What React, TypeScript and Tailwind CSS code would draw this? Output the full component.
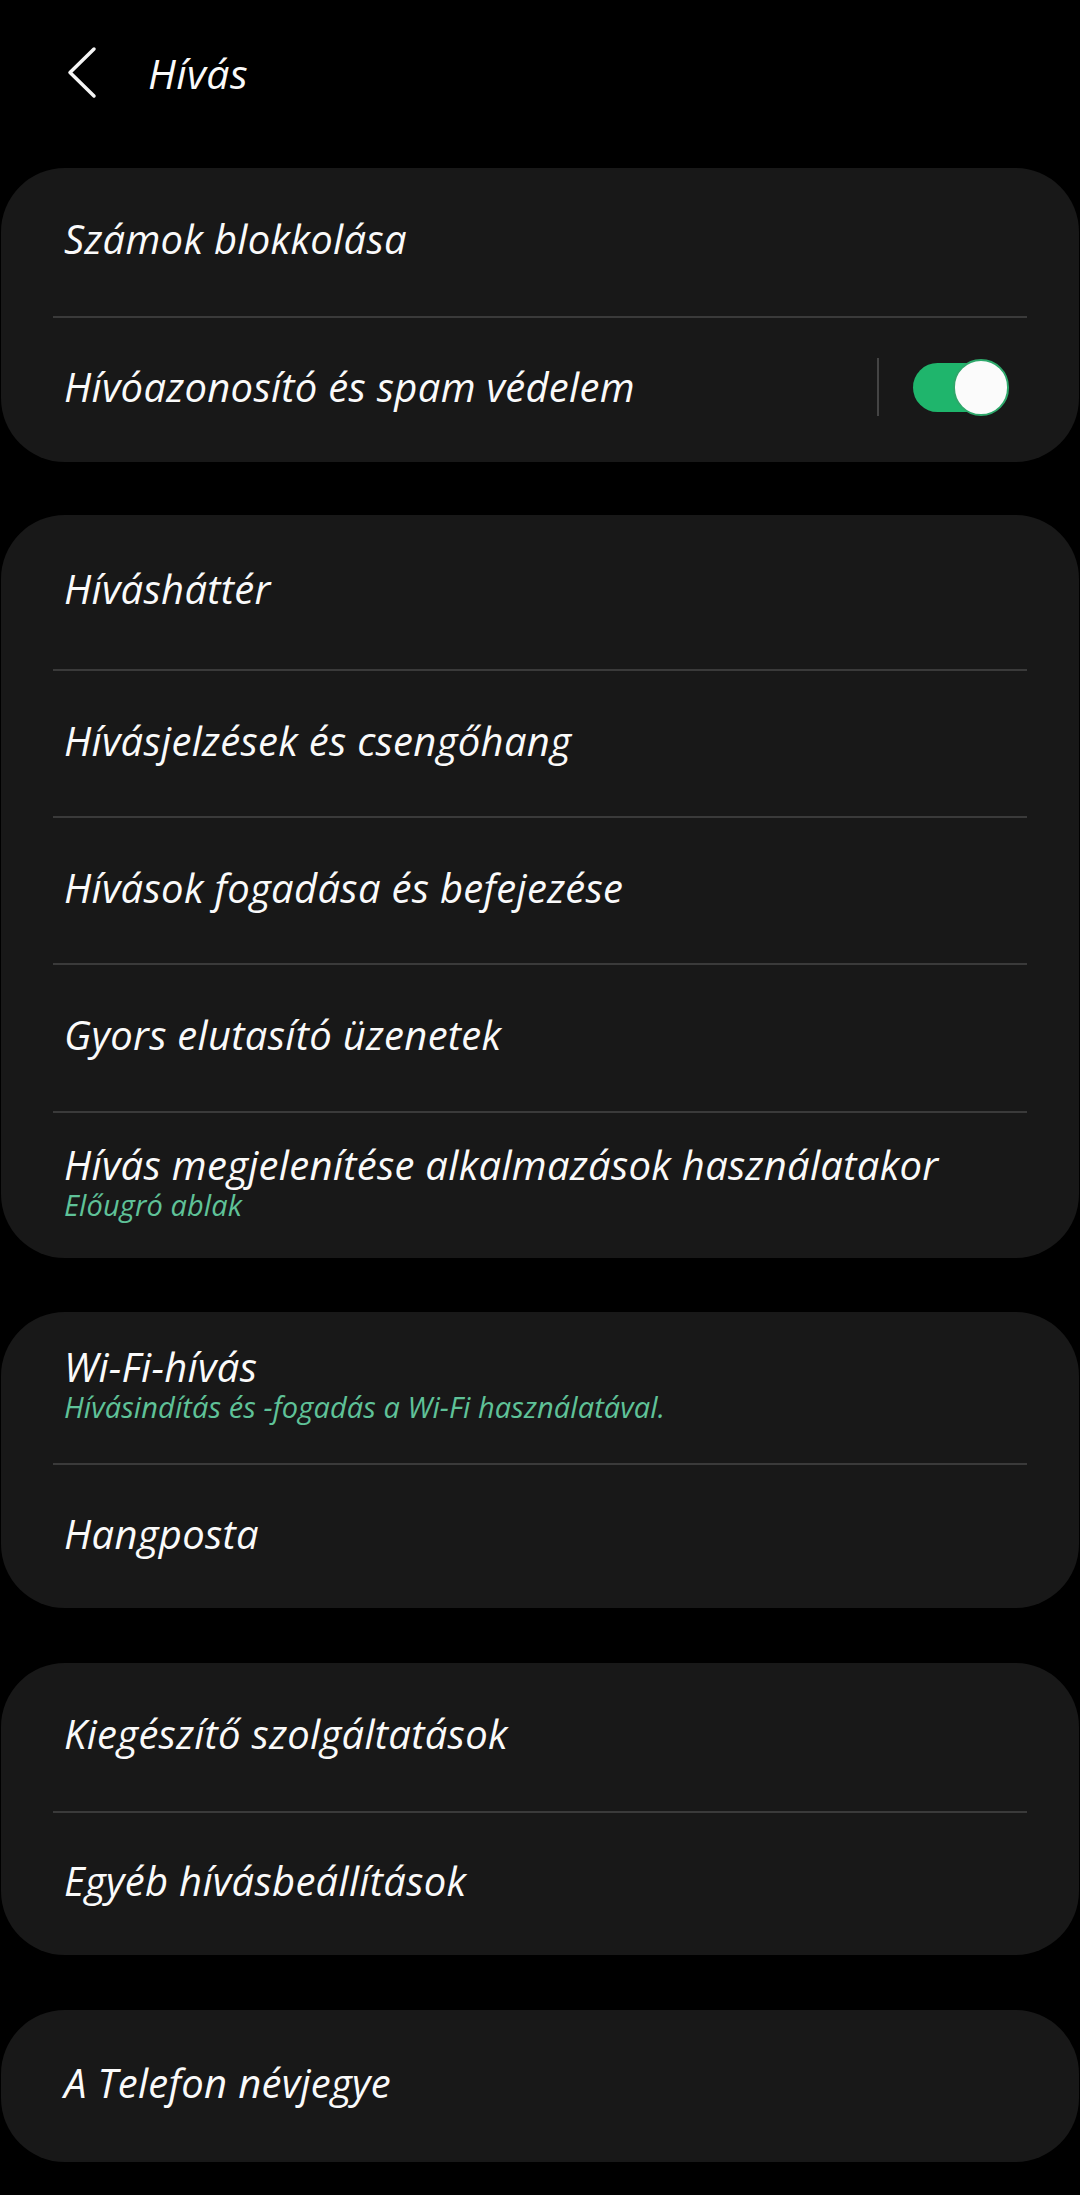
import { Fragment } from 'react'

type Row = { title: string; sub?: string; h: number; toggle?: boolean }

// heights measured divider-to-divider, divider included
const groups: { mt: number; rows: Row[] }[] = [
  {
    mt: 22,
    rows: [
      { title: 'Számok blokkolása', h: 148 },
      { title: 'Hívóazonosító és spam védelem', h: 146, toggle: true },
    ],
  },
  {
    mt: 53,
    rows: [
      { title: 'Hívásháttér', h: 154 },
      { title: 'Hívásjelzések és csengőhang', h: 147 },
      { title: 'Hívások fogadása és befejezése', h: 147 },
      { title: 'Gyors elutasító üzenetek', h: 148 },
      { title: 'Hívás megjelenítése alkalmazások használatakor', sub: 'Előugró ablak', h: 147 },
    ],
  },
  {
    mt: 54,
    rows: [
      { title: 'Wi-Fi-hívás', sub: 'Hívásindítás és -fogadás a Wi-Fi használatával.', h: 151 },
      { title: 'Hangposta', h: 145 },
    ],
  },
  {
    mt: 55,
    rows: [
      { title: 'Kiegészítő szolgáltatások', h: 148 },
      { title: 'Egyéb hívásbeállítások', h: 144 },
    ],
  },
  { mt: 55, rows: [{ title: 'A Telefon névjegye', h: 152 }] },
]

function Toggle() {
  return (
    <div className="relative w-[96px] h-[57px]">
      <div className="absolute left-0 top-[4px] w-[88px] h-[49px] rounded-full bg-[#1fb56c]" />
      <div className="absolute left-[40px] top-0 w-[56px] h-[57px] rounded-full bg-[#fbfbfb] border-2 border-[#2ea86b]" />
    </div>
  )
}

function SettingRow({ row, first }: { row: Row; first: boolean }) {
  return (
    <div
      className="flex items-center pl-[63px] pr-[70px] pb-[6px]"
      style={{ height: first ? row.h : row.h - 2 }}
    >
      <div className="flex-1 flex flex-col">
        <span className="text-[40px] leading-[44px] tracking-[0.3px] text-[#fafafa]">{row.title}</span>
        {row.sub && (
          <span className="mt-[1px] text-[29px] leading-[34px] tracking-[0.1px] text-[#5fc298]">{row.sub}</span>
        )}
      </div>
      {row.toggle && (
        <div className="flex items-center">
          <div className="w-[2px] h-[58px] bg-[#444444] mr-[34px]" />
          <Toggle />
        </div>
      )}
    </div>
  )
}

export default function App() {
  return (
    <div className="w-[1080px] min-h-[2195px] bg-black italic font-['Open_Sans','Noto_Sans',sans-serif]">
      {/* Header */}
      <div className="flex items-center h-[146px]">
        <svg width="40" height="56" viewBox="0 0 40 56" className="ml-[62px]" fill="none">
          <polyline points="32,4 8,27.5 32,51" stroke="#f5f5f5" strokeWidth="3.5" strokeLinecap="round" strokeLinejoin="round" />
        </svg>
        <span className="ml-[46px] text-[41px] leading-[44px] tracking-[0.4px] text-[#fafafa]">Hívás</span>
      </div>

      <div className="flex flex-col pb-[33px]">
        {groups.map((g, gi) => (
          <div key={gi} className="bg-[#181818] rounded-[64px] mx-px" style={{ marginTop: g.mt }}>
            {g.rows.map((row, ri) => (
              <Fragment key={row.title}>
                {ri > 0 && <div className="mx-[52px] h-[2px] bg-[#3a3a3a]" />}
                <SettingRow row={row} first={ri === 0} />
              </Fragment>
            ))}
          </div>
        ))}
      </div>
    </div>
  )
}
